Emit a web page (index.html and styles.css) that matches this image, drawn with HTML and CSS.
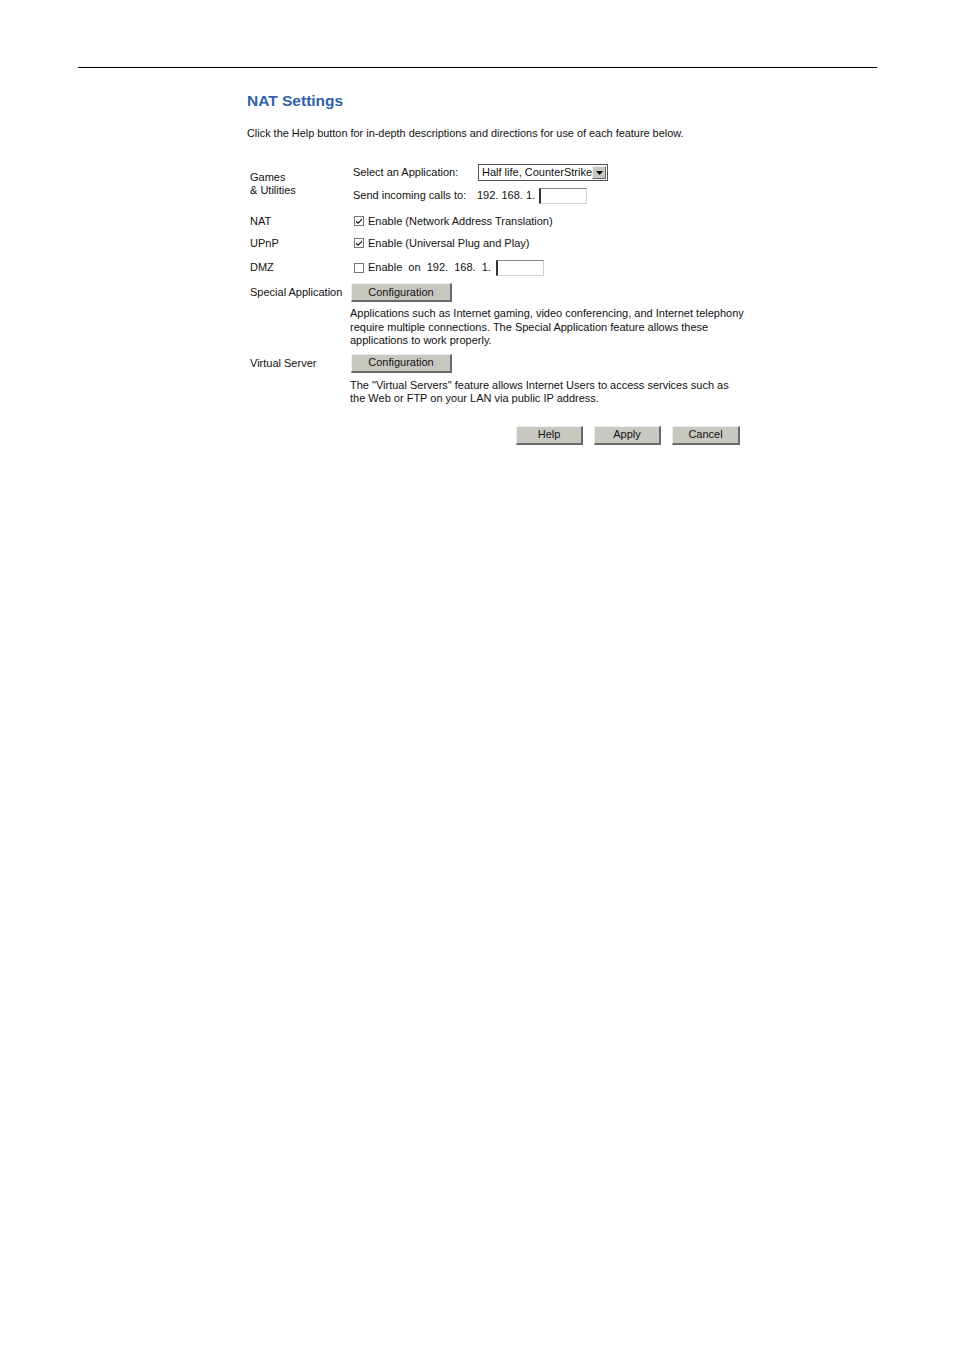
FILE: index.html
```html
<!DOCTYPE html>
<html>
<head>
<meta charset="utf-8">
<title>NAT Settings</title>
<link rel="stylesheet" href="styles.css">
</head>
<body>
<div class="rule"></div>
<div class="page">
  <h1 class="title">NAT Settings</h1>
  <p class="intro">Click the Help button for in-depth descriptions and directions for use of each feature below.</p>

  <div class="form">
    <div class="label label-games">Games<br>&amp; Utilities</div>
    <div class="cell games">
      <div class="line line-select">
        <span class="field-name">Select an Application:</span>
        <span class="select"><span class="select-text">Half life, CounterStrike</span><span class="select-arrow"><svg width="7" height="4" viewBox="0 0 7 4"><path d="M0 0H7L3.5 4Z" fill="#000"/></svg></span></span>
      </div>
      <div class="line line-send">
        <span class="field-name">Send incoming calls to:</span>
        <span class="ip">192. 168. 1.</span>
        <span class="input"></span>
      </div>
    </div>

    <div class="label label-one row-nat">NAT</div>
    <div class="cell row-nat">
      <span class="check checked"><svg width="8" height="8" viewBox="0 0 8 8"><path d="M1 3.5L3 5.5L7 1.5V3L3 7L1 5Z" fill="#000"/></svg></span>
      <span>Enable (Network Address Translation)</span>
    </div>

    <div class="label label-one row-upnp">UPnP</div>
    <div class="cell row-upnp">
      <span class="check checked"><svg width="8" height="8" viewBox="0 0 8 8"><path d="M1 3.5L3 5.5L7 1.5V3L3 7L1 5Z" fill="#000"/></svg></span>
      <span>Enable (Universal Plug and Play)</span>
    </div>

    <div class="label label-one row-dmz">DMZ</div>
    <div class="cell row-dmz">
      <span class="check"></span>
      <span class="dmz-text">Enable&nbsp; on&nbsp; 192.&nbsp; 168.&nbsp; 1.</span>
      <span class="input input-dmz"></span>
    </div>

    <div class="label label-one row-btn">Special Application</div>
    <div class="cell row-btn">
      <span class="btn btn-config">Configuration</span>
    </div>
    <div></div>
    <div class="cell desc">Applications such as Internet gaming, video conferencing, and Internet telephony require multiple connections. The Special Application feature allows these applications to work properly.</div>

    <div class="label label-one row-btn row-vs">Virtual Server</div>
    <div class="cell row-btn row-vs">
      <span class="btn btn-config">Configuration</span>
    </div>
    <div></div>
    <div class="cell desc desc-vs">The "Virtual Servers" feature allows Internet Users to access services such as the Web or FTP on your LAN via public IP address.</div>

    <div></div>
    <div class="cell actions">
      <span class="btn btn-action">Help</span>
      <span class="btn btn-action">Apply</span>
      <span class="btn btn-action btn-cancel">Cancel</span>
    </div>
  </div>
</div>
</body>
</html>
```

FILE: styles.css
```css
html, body {
  margin: 0;
  padding: 0;
  background: #fff;
}
body {
  font-family: "Liberation Sans", Arial, sans-serif;
  font-size: 11px;
  color: #111;
}
.rule {
  margin: 67px 0 0 78px;
  width: 799px;
  height: 0;
  border-top: 1px solid #000;
}
.page {
  margin-left: 247px;
}
.title {
  margin: 24px 0 0 0;
  font-size: 15.5px;
  line-height: 18px;
  font-weight: bold;
  color: #2d62ab;
}
.intro {
  margin: 16px 0 0 0;
  line-height: 14px;
  font-size: 10.9px;
}
.form {
  margin: 24px 0 0 3px;
  display: grid;
  grid-template-columns: 100px 400px;
  align-items: center;
}
.label {
  line-height: 13px;
  white-space: nowrap;
}
.label-one {
  display: flex;
  align-items: center;
}
.label-games {
  padding-top: 0;
}
.cell {
  display: flex;
  align-items: center;
  line-height: 13px;
}
.games {
  flex-direction: column;
  align-items: flex-start;
  padding-left: 3px;
}
.line {
  display: flex;
  align-items: center;
  height: 17px;
}
.line-send {
  margin-top: 6px;
}
.field-name {
  width: 125px;
}
.select {
  display: flex;
  align-items: center;
  width: 128px;
  height: 15px;
  border: 1px solid #555;
  background: #fff;
}
.select-text {
  flex: 1;
  padding-left: 3px;
  font-size: 11px;
  white-space: nowrap;
}
.select-arrow {
  display: flex;
  align-items: center;
  justify-content: center;
  width: 12px;
  height: 11px;
  margin-right: 1px;
  background: #c8c8c0;
  border-top: 1px solid #eee;
  border-left: 1px solid #eee;
  border-right: 1px solid #666;
  border-bottom: 1px solid #666;
}
.ip {
  margin-left: -1px;
  margin-right: 4px;
}
.input {
  display: inline-block;
  width: 45px;
  height: 14px;
  border-top: 1px solid #888;
  border-left: 2px solid #333;
  border-right: 1px solid #d4d0c8;
  border-bottom: 1px solid #d4d0c8;
  background: #fff;
}
.input-dmz {
  margin-left: 5px;
}
.dmz-text {
  margin-left: 0;
}
.row-nat {
  margin-top: 9px;
  height: 16px;
}
.row-upnp {
  margin-top: 6px;
  height: 16px;
}
.row-dmz {
  margin-top: 8px;
  height: 17px;
}
.check {
  display: inline-flex;
  align-items: center;
  justify-content: center;
  box-sizing: border-box;
  width: 10px;
  height: 10px;
  margin: 0 4px 0 4px;
  border: 1px solid #777;
  background: #fff;
}
.row-btn {
  margin-top: 7px;
  height: 19px;
}
.row-vs {
  margin-top: 6px;
}
.btn {
  display: inline-flex;
  align-items: center;
  justify-content: center;
  box-sizing: border-box;
  height: 19px;
  background: #c8c8c0;
  border-top: 1px solid #eeeeea;
  border-left: 1px solid #eeeeea;
  border-right: 2px solid #6a6a6a;
  border-bottom: 2px solid #6a6a6a;
  color: #111;
  font-size: 11px;
}
.btn-config {
  width: 101px;
  margin-left: 1px;
}
.desc {
  display: block;
  margin-top: 5px;
  line-height: 13.5px;
  width: 395px;
}
.desc-vs {
  margin-top: 6px;
}
.actions {
  margin-top: 20px;
  padding-left: 166px;
}
.btn-action {
  width: 67px;
  margin-right: 11px;
}
.btn-cancel {
  width: 68px;
  margin-right: 0;
}
```
